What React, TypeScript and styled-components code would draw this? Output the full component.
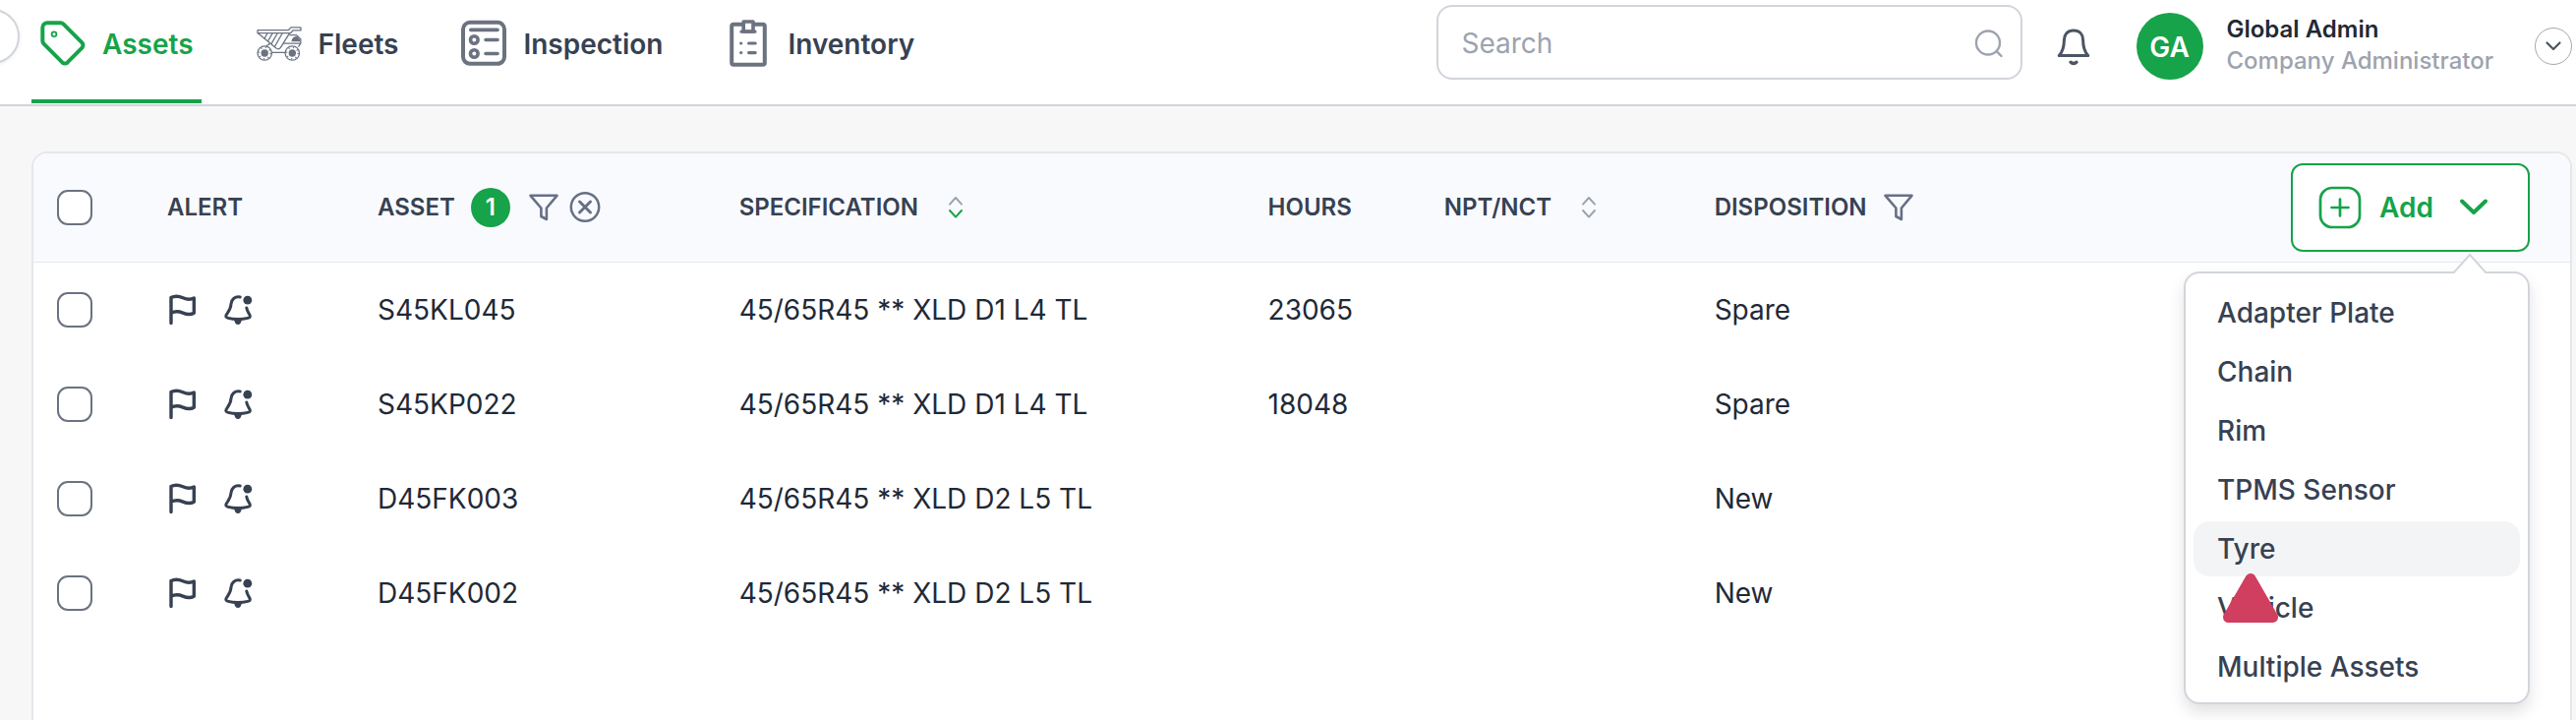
import React from "react";
import styled, { createGlobalStyle } from "styled-components";

const green = "#16a34a";
const slate = "#374151";
const steel = "#6b7280";
const line = "#d1d5db";

const GlobalStyle = createGlobalStyle`
  *, *::before, *::after { box-sizing: border-box; }
  body {
    margin: 0;
    background: #f7f7f7;
    color: #1f2937;
    font-family: Inter, "Liberation Sans", sans-serif;
    font-size: 28px;
    line-height: 40px;
  }
  button, input { font: inherit; color: inherit; }
  button { padding: 0; border: 0; background: none; cursor: pointer; }
  svg { display: block; flex: none; }
`;

const Page = styled.div`
  display: flex;
  flex-direction: column;
  min-height: 100vh;
`;

const TopBar = styled.header`
  position: relative;
  display: flex;
  align-items: flex-start;
  padding: 0 4px 0 32px;
  background: #fff;
  border-bottom: 2px solid ${line};
`;

const SidebarToggle = styled.button`
  position: absolute;
  top: 9px;
  left: -36px;
  width: 56px;
  height: 56px;
  border: 2px solid ${line};
  border-radius: 50%;
  background: #fff;
  box-shadow: 0 1px 4px rgba(0, 0, 0, 0.08);
`;

const Nav = styled.nav`
  display: flex;
  gap: 47px;
  padding-bottom: 1px;
`;

const NavLink = styled.a<{ $active?: boolean }>`
  display: flex;
  align-items: center;
  gap: 16px;
  padding: 20px 8px 31px;
  border-bottom: 4px solid ${(p) => (p.$active ? green : "transparent")};
  color: ${(p) => (p.$active ? green : slate)};
  font-weight: 600;
  line-height: 50px;
  text-decoration: none;
  svg { margin-bottom: 2px; }
`;

const SearchBox = styled.label`
  display: flex;
  align-items: center;
  flex: 0 1 596px;
  height: 76px;
  margin: 5px 0 0 auto;
  padding: 2px 16px 0 24px;
  border: 2px solid ${line};
  border-radius: 16px;
  background: #fff;
`;

const SearchInput = styled.input`
  flex: 1;
  min-width: 0;
  padding: 0;
  border: 0;
  outline: 0;
  background: none;
  &::placeholder { color: #9ca3af; opacity: 1; }
`;

const Account = styled.div`
  display: flex;
  align-items: center;
  height: 68px;
  margin: 13px 0 0 32px;
`;

const Avatar = styled.span`
  width: 68px;
  height: 68px;
  margin: 0 24px 0 44px;
  border-radius: 50%;
  background: ${green};
  color: #fff;
  font-weight: 600;
  line-height: 70px;
  text-align: center;
`;

const Person = styled.div`
  margin-right: 42px;
  padding-bottom: 2px;
  color: #9ca3af;
  font-size: 24px;
  font-weight: 500;
  line-height: 32px;
  white-space: nowrap;
`;

const PersonName = styled.div`
  color: #1f2937;
  font-weight: 600;
`;

const AccountToggle = styled.button`
  display: grid;
  place-items: center;
  width: 38px;
  height: 38px;
  border: 1px solid #a8a8a8;
  border-radius: 50%;
`;

const Card = styled.main`
  flex: 1;
  margin: 46px 4px 0 32px;
  border: 2px solid #e5e7eb;
  border-bottom: 0;
  border-radius: 16px 16px 0 0;
  background: #fff;
`;

const Table = styled.table`
  width: 100%;
  table-layout: fixed;
  border-collapse: separate;
  border-spacing: 0;
`;

const Col = styled.col<{ $w?: string }>`
  width: ${(p) => p.$w ?? "auto"};
`;

const HeadCell = styled.th`
  height: 111px;
  padding: 0 0 0 24px;
  border-bottom: 1px solid #e5e7eb;
  background: #f9fafe;
  color: ${slate};
  font-size: 24px;
  font-weight: 600;
  text-align: left;
  white-space: nowrap;
  &:first-child { border-top-left-radius: 14px; }
  &:last-child { border-top-right-radius: 14px; padding-right: 41px; text-align: right; }
`;

const HeadContent = styled.div<{ $gap?: number }>`
  display: flex;
  align-items: center;
  gap: ${(p) => p.$gap ?? 16}px;
`;

const FilterTools = styled.div`
  display: flex;
  gap: 10px;
  padding-left: 2px;
`;

const Count = styled.span`
  width: 40px;
  border-radius: 50%;
  background: ${green};
  color: #fff;
  text-align: center;
`;

const Cell = styled.td`
  height: 96px;
  padding: 0 0 0 24px;
  white-space: nowrap;
`;

const Check = styled.input`
  display: block;
  appearance: none;
  width: 36px;
  height: 36px;
  margin: 0;
  border: 2px solid ${steel};
  border-radius: 11px;
  background: #fff;
  &:checked { background: ${green}; border-color: ${green}; }
`;

const AlertIcons = styled.div`
  display: flex;
  gap: 24px;
`;

const AddWrap = styled.div`
  position: relative;
  display: inline-block;
  vertical-align: middle;
`;

const AddButton = styled.button`
  display: flex;
  align-items: center;
  height: 90px;
  padding: 0 39px 0 26px;
  border: 2px solid ${green};
  border-radius: 12px;
  background: #fff;
  color: ${green};
  font-size: 28px;
  font-weight: 600;
`;

const AddLabel = styled.span`
  margin: 0 25px 0 18px;
`;

const Menu = styled.div`
  position: absolute;
  z-index: 1;
  top: 110px;
  right: 0;
  width: 352px;
  padding: 12px 8px 8px;
  border: 2px solid ${line};
  border-radius: 16px;
  background: #fff;
  box-shadow: 0 8px 16px rgba(0, 0, 0, 0.12);
`;

const MenuArrow = styled.svg`
  position: absolute;
  top: -21px;
  right: 41px;
`;

const MenuList = styled.ul`
  display: grid;
  gap: 4px;
  margin: 0;
  padding: 0;
  list-style: none;
`;

const MenuItem = styled.button<{ $active?: boolean }>`
  width: 100%;
  height: 56px;
  padding: 0 24px;
  border-radius: 16px;
  background: ${(p) => (p.$active ? "#f3f4f6" : "transparent")};
  color: ${slate};
  font-size: 28px;
  font-weight: 500;
  text-align: left;
`;

const Marker = styled.svg`
  position: absolute;
  top: 305px;
  left: 38px;
  pointer-events: none;
`;

const TagIcon = () => (
  <svg width="48" height="48" fill="none" stroke={green} strokeWidth="4">
    <path d="M8 3.3H21.5a4.5 4.5 0 0 1 3.2 1.3L43.4 23.3a4 4 0 0 1 0 5.4L28.7 43.4a4 4 0 0 1-5.4 0L4.6 24.7A4.5 4.5 0 0 1 3.3 21.5V8A4.7 4.7 0 0 1 8 3.3Z" />
    <circle cx="15" cy="14.7" r="2.4" strokeWidth="1.8" />
  </svg>
);

const Wheel = ({ x }: { x: number }) => (
  <>
    <circle cx={x} cy="34" r="7.2" fill="#fff" />
    <circle cx={x} cy="34" r="5.8" strokeWidth="1.6" strokeDasharray="1 3.55" />
    <circle cx={x} cy="34" r="3.7" fill={steel} stroke="none" />
  </>
);

const TruckIcon = () => (
  <svg width="48" height="48" fill="none" stroke={steel} strokeWidth="1.3" strokeLinejoin="round">
    <path d="M2 10.7H33.2L36 7.9H45.4a.6.6 0 0 1 .6.6V10.8H38.2L35.4 13.7H2Z" />
    <path d="M2.4 13.7 20.6 28.8Q23.4 31 25.4 28.4L34.6 13.7" />
    <path d="M9 19.2 12 13.7M12.4 22 17.2 13.7M15.8 24.9 22.2 13.7M19.2 27.7 27.2 13.7" />
    <path d="M34.4 15.6H41.6L45.8 19.6V24.2L43.4 27.6M28 24.2H45.8" />
    <path d="M36.4 22.2C37 18.6 38.6 17 42.4 17L45 20V22.2Z" fill={steel} stroke="none" />
    <path d="M16.5 33.4H30M11 26.8 14.6 24.4" />
    <Wheel x={9.2} />
    <Wheel x={37.3} />
  </svg>
);

const InspectionIcon = () => (
  <svg width="48" height="48" fill="none" stroke={steel} strokeWidth="3.6" strokeLinecap="round">
    <rect x="3" y="2.8" width="42" height="42" rx="7" strokeWidth="4" />
    <path d="M10.8 10.4H38M26 20.5H38M26 34.5H38" />
    <circle cx="14.3" cy="20.5" r="3.8" />
    <circle cx="14.3" cy="34.5" r="3.8" />
  </svg>
);

const InventoryIcon = () => (
  <svg width="48" height="48" fill="none" stroke={steel} strokeWidth="3.6" strokeLinecap="round" strokeLinejoin="round">
    <rect x="7.2" y="4.8" width="33.6" height="41" rx="2" strokeWidth="4" />
    <path d="M19.2 2H29V12H19.2Z" fill="#fff" />
    <path d="M17 12.2H31M24.6 24H31.2M24.6 33.6H31.2" strokeWidth="3.2" />
    <circle cx="16.7" cy="24" r="1.6" fill={steel} stroke="none" />
    <circle cx="16.7" cy="33.6" r="1.6" fill={steel} stroke="none" />
  </svg>
);

const SearchIcon = () => (
  <svg width="32" height="32" fill="none" stroke="#9ca3af" strokeWidth="2.4" strokeLinecap="round">
    <circle cx="15" cy="15.5" r="12" />
    <path d="M23.5 24 28.5 29" />
  </svg>
);

const BellIcon = () => (
  <svg width="40" height="40" fill="none" stroke="#4b5563" strokeWidth="3" strokeLinecap="round" strokeLinejoin="round">
    <path d="M20 4C13.8 4 10.4 8.2 10.4 13.5 10.4 21 9 25.5 5.2 29.6H34.8C31 25.5 29.6 21 29.6 13.5 29.6 8.2 26.2 4 20 4Z" />
    <path d="M17 36.2C18.6 38 21.4 38 23 36.2" strokeWidth="3.4" />
  </svg>
);

const SmallChevron = () => (
  <svg width="18" height="12" fill="none" stroke="#4b5563" strokeWidth="2.2" strokeLinecap="round" strokeLinejoin="round">
    <path d="M2.5 2.5 9 9 15.5 2.5" />
  </svg>
);

const FunnelIcon = () => (
  <svg width="32" height="32" fill="none" stroke="#667085" strokeWidth="2.6" strokeLinejoin="round">
    <path d="M2.5 3.8H29.5L18.9 16.5V28L13.4 25V16.5Z" />
  </svg>
);

const ClearIcon = () => (
  <svg width="32" height="32" fill="none" stroke="#667085" strokeWidth="2.5" strokeLinecap="round">
    <circle cx="16" cy="15.5" r="14.2" />
    <path d="M10.5 10 21.5 21M21.5 10 10.5 21" strokeWidth="3" />
  </svg>
);

const SortIcon = ({ descending }: { descending?: boolean }) => (
  <svg width="16" height="24" fill="none" stroke="#9ca3af" strokeWidth="2" strokeLinecap="round" strokeLinejoin="round">
    <path d="M2 8.6 8 2 14 8.6" />
    <path d="M2 15 8 21.6 14 15" stroke={descending ? green : "#9ca3af"} />
  </svg>
);

const FlagIcon = () => (
  <svg width="32" height="32" fill="none" stroke={slate} strokeWidth="3.4" strokeLinecap="round" strokeLinejoin="round">
    <path d="M4 29.6V3.6C8 1.4 11.5 1.8 16 3.8s8 2 11.3.2V19.2c-3.8 2.2-7 1.7-11.3-.1S8 17.2 4 19.2" />
  </svg>
);

const AlarmIcon = () => (
  <svg width="32" height="32" fill="none" stroke={slate} strokeWidth="3" strokeLinecap="round" strokeLinejoin="round">
    <path d="M18.2 3C12.6 2.2 9.4 5.4 9 10 8.8 14.6 7.6 16.4 5 19.8 3 22.4 3.6 23.8 6 24.4 9 25.2 12 25.6 16 25.6S23 25.2 26 24.4C28.6 23.8 29 22.4 27.2 19.8 26 18 25.2 16.4 24.8 14" />
    <path d="M12 26H20C19.4 29 18 31 16 31S12.6 29 12 26Z" fill={slate} stroke="none" />
    <circle cx="25.8" cy="6.2" r="4.4" fill={slate} stroke="none" />
  </svg>
);

const PlusIcon = () => (
  <svg width="44" height="44" fill="none" stroke={green} strokeWidth="2.7" strokeLinecap="round">
    <rect x="2" y="2" width="40" height="40" rx="12" />
    <path d="M22 13.500V30.500M13.500 22H30.500" />
  </svg>
);

const BigChevron = () => (
  <svg width="32" height="32" fill="none" stroke={green} strokeWidth="4" strokeLinecap="round" strokeLinejoin="round">
    <path d="M4 9.5 16 21 28 9.5" />
  </svg>
);

const rows = [
  { asset: "S45KL045", spec: "45/65R45 ** XLD D1 L4 TL", hours: "23065", disposition: "Spare" },
  { asset: "S45KP022", spec: "45/65R45 ** XLD D1 L4 TL", hours: "18048", disposition: "Spare" },
  { asset: "D45FK003", spec: "45/65R45 ** XLD D2 L5 TL", hours: "", disposition: "New" },
  { asset: "D45FK002", spec: "45/65R45 ** XLD D2 L5 TL", hours: "", disposition: "New" },
];

const menuItems = ["Adapter Plate", "Chain", "Rim", "TPMS Sensor", "Tyre", "Vehicle", "Multiple Assets"];

export default function App() {
  return (
    <Page>
      <GlobalStyle />
      <TopBar>
        <SidebarToggle aria-label="Toggle sidebar" />
        <Nav>
          <NavLink href="#assets" $active aria-current="page"><TagIcon />Assets</NavLink>
          <NavLink href="#fleets"><TruckIcon />Fleets</NavLink>
          <NavLink href="#inspection"><InspectionIcon />Inspection</NavLink>
          <NavLink href="#inventory"><InventoryIcon />Inventory</NavLink>
        </Nav>
        <SearchBox>
          <SearchInput type="search" placeholder="Search" aria-label="Search" />
          <SearchIcon />
        </SearchBox>
        <Account>
          <button aria-label="Notifications"><BellIcon /></button>
          <Avatar>GA</Avatar>
          <Person>
            <PersonName>Global Admin</PersonName>
            <div>Company Administrator</div>
          </Person>
          <AccountToggle aria-label="Account menu"><SmallChevron /></AccountToggle>
        </Account>
      </TopBar>
      <Card>
        <Table>
          <colgroup>
            <Col $w="112px" />
            <Col $w="214px" />
            <Col $w="14.25%" />
            <Col $w="20.85%" />
            <Col $w="6.95%" />
            <Col $w="10.65%" />
            <Col />
            <Col />
          </colgroup>
          <thead>
            <tr>
              <HeadCell><Check type="checkbox" aria-label="Select all assets" /></HeadCell>
              <HeadCell>ALERT</HeadCell>
              <HeadCell>
                <HeadContent>
                  ASSET
                  <Count>1</Count>
                  <FilterTools>
                    <button aria-label="Filter assets"><FunnelIcon /></button>
                    <button aria-label="Clear asset filter"><ClearIcon /></button>
                  </FilterTools>
                </HeadContent>
              </HeadCell>
              <HeadCell>
                <HeadContent $gap={30}>
                  SPECIFICATION
                  <button aria-label="Sort by specification"><SortIcon descending /></button>
                </HeadContent>
              </HeadCell>
              <HeadCell>HOURS</HeadCell>
              <HeadCell>
                <HeadContent $gap={30}>
                  NPT/NCT
                  <button aria-label="Sort by NPT/NCT"><SortIcon /></button>
                </HeadContent>
              </HeadCell>
              <HeadCell>
                <HeadContent>
                  DISPOSITION
                  <button aria-label="Filter by disposition"><FunnelIcon /></button>
                </HeadContent>
              </HeadCell>
              <HeadCell>
                <AddWrap>
                  <AddButton aria-haspopup="menu" aria-expanded="true">
                    <PlusIcon />
                    <AddLabel>Add</AddLabel>
                    <BigChevron />
                  </AddButton>
                  <Menu>
                    <MenuArrow width="36" height="21" fill="#fff" stroke={line} strokeWidth="2">
                      <path d="M0 22 18 2 36 22" />
                    </MenuArrow>
                    <MenuList>
                      {menuItems.map((item) => (
                        <li key={item}>
                          <MenuItem $active={item === "Tyre"}>{item}</MenuItem>
                        </li>
                      ))}
                    </MenuList>
                    <Marker width="56" height="52" aria-hidden="true">
                      <path
                        d="M28 5.5 50.5 44.5H5.5Z"
                        fill="#d03f5f"
                        stroke="#d03f5f"
                        strokeWidth="11"
                        strokeLinejoin="round"
                      />
                    </Marker>
                  </Menu>
                </AddWrap>
              </HeadCell>
            </tr>
          </thead>
          <tbody>
            {rows.map((row) => (
              <tr key={row.asset}>
                <Cell><Check type="checkbox" aria-label={`Select ${row.asset}`} /></Cell>
                <Cell><AlertIcons><FlagIcon /><AlarmIcon /></AlertIcons></Cell>
                <Cell>{row.asset}</Cell>
                <Cell>{row.spec}</Cell>
                <Cell>{row.hours}</Cell>
                <Cell />
                <Cell>{row.disposition}</Cell>
                <Cell />
              </tr>
            ))}
          </tbody>
        </Table>
      </Card>
    </Page>
  );
}
